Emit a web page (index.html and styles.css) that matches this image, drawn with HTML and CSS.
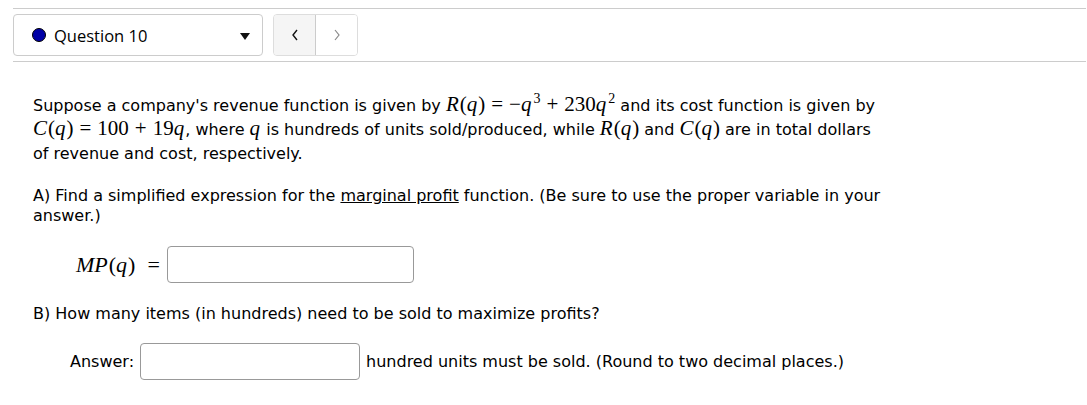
FILE: index.html
```html
<!DOCTYPE html>
<html>
<head>
<meta charset="utf-8">
<link rel="stylesheet" href="styles.css">
</head>
<body>
<div class="page">
  <div class="toolbar">
    <div class="select">
      <span class="dot"></span>
      <span class="qlabel">Question 10</span>
      <span class="caret"></span>
    </div>
    <div class="nav">
      <div class="navbtn prev"><svg width="10" height="14" viewBox="0 0 10 14"><path d="M7 2 L3 7 L7 12" fill="none" stroke="#111" stroke-width="1.4"/></svg></div>
      <div class="navbtn next"><svg width="10" height="14" viewBox="0 0 10 14"><path d="M3 2 L7 7 L3 12" fill="none" stroke="#888" stroke-width="1.2"/></svg></div>
    </div>
  </div>
  <div class="content">
    <p class="para intro">Suppose a company's revenue function is given by <span class="m"><i>R</i>(<i>q</i>)<span class="op">=</span>−<i>q</i><sup>3</sup><span class="op">+</span>230<i>q</i><sup>2</sup></span> and its cost function is given by <span class="m"><i>C</i>(<i>q</i>)<span class="op">=</span>100<span class="op">+</span>19<i>q</i></span>, where <span class="m"><i>q</i></span> is hundreds of units sold/produced, while <span class="m"><i>R</i>(<i>q</i>)</span> and <span class="m"><i>C</i>(<i>q</i>)</span> are in total dollars of revenue and cost, respectively.</p>
    <p class="para partA">A) Find a simplified expression for the <u>marginal profit</u> function. (Be sure to use the proper variable in your answer.)</p>
    <div class="row mprow">
      <span class="m mplabel"><i>MP</i>(<i>q</i>)<span class="op">=</span></span>
      <span class="input wide"></span>
    </div>
    <p class="para partB">B) How many items (in hundreds) need to be sold to maximize profits?</p>
    <div class="row ansrow">
      <span class="anslabel">Answer:</span>
      <span class="input narrow"></span>
      <span class="after">hundred units must be sold. (Round to two decimal places.)</span>
    </div>
  </div>
</div>
</body>
</html>
```
FILE: styles.css
```css
html, body {
  margin: 0;
  padding: 0;
  background: #fff;
}
.page {
  padding: 8px 1px 0 13px;
  font-family: "DejaVu Sans", Verdana, sans-serif;
  color: #000;
}
.toolbar {
  border-top: 1px solid #ccc;
  border-bottom: 1px solid #ccc;
  padding: 5px 0 5px 0;
  display: flex;
  align-items: center;
  gap: 10px;
}
.select {
  width: 250px;
  height: 42px;
  border: 1px solid #ccc;
  border-radius: 4px;
  display: flex;
  align-items: center;
  padding: 0 0 0 18px;
  box-sizing: border-box;
}
.dot {
  width: 14px;
  height: 14px;
  border-radius: 50%;
  background: #0000a6;
  border: 1px solid #000;
  box-sizing: border-box;
}
.qlabel {
  font-family: "Open Sans", "Noto Sans", sans-serif;
  font-size: 16.5px;
  margin-left: 8px;
  flex: 1;
  color: #000;
}
.caret {
  width: 0;
  height: 0;
  border-left: 5px solid transparent;
  border-right: 5px solid transparent;
  border-top: 7px solid #111;
  margin-right: 12px;
  margin-top: 2px;
}
.nav {
  display: flex;
  height: 42px;
  border: 1px solid #ddd;
  border-radius: 4px;
  box-sizing: border-box;
  overflow: hidden;
}
.navbtn {
  width: 41px;
  display: flex;
  align-items: center;
  justify-content: center;
}
.prev {
  background: #f5f5f5;
  border-right: 1px solid #ccc;
}
.next {
  background: #fff;
}
.content {
  padding: 32px 0 0 20px;
  font-size: 16px;
  max-width: 855px;
}
.para {
  margin: 0;
  line-height: 24px;
}
.partA {
  margin-top: 20px;
  line-height: 20px;
}
.m {
  font-family: "Liberation Serif", "Times New Roman", serif;
  font-size: 21px;
  line-height: 1;
  white-space: nowrap;
}
.m i {
  font-style: italic;
  padding-right: 1px;
}
.m sup {
  font-size: 14px;
  vertical-align: 8px;
  line-height: 0;
  margin-left: 1px;
}
.op {
  padding: 0 6px;
}
.row {
  display: flex;
  align-items: center;
}
.mprow {
  margin-top: 20px;
  padding-left: 43px;
}
.mplabel {
  margin-right: 7px;
  font-size: 22px;
}
.mplabel .op {
  padding: 0 0 0 12px;
}
.input {
  display: inline-block;
  border: 1px solid #999;
  border-radius: 4px;
  box-sizing: border-box;
  height: 37px;
  background: #fff;
}
.wide {
  width: 247px;
}
.partB {
  margin-top: 21px;
  line-height: 20px;
}
.ansrow {
  margin-top: 19px;
  padding-left: 37px;
}
.anslabel {
  margin-right: 6px;
}
.narrow {
  width: 220px;
}
.after {
  margin-left: 6px;
}
```
